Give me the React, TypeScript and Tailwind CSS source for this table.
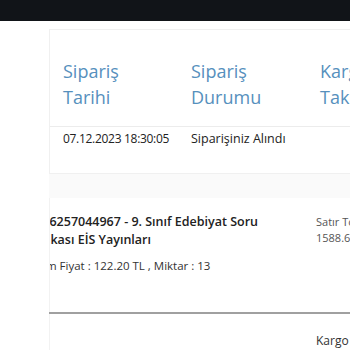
import React from 'react';

const font = { fontFamily: '"Open Sans", "Noto Sans", sans-serif' };

const App: React.FC = () => {
  return (
    <div className="w-[350px] h-[350px] overflow-hidden bg-white" style={font}>
      <div className="h-[21px] bg-[#111418]" />
      <div className="pl-[49px] pt-[8px]">
        {/* order table */}
        <div className="w-[420px] border border-r-0 border-[#f0f0f0]">
          <div className="grid grid-cols-[128px_129px_128px] border-b border-[#ececec] pl-[13px] pt-[28px] pb-[16px]">
            {['Sipariş Tarihi', 'Sipariş Durumu', 'Kargo Takip'].map((h) => (
              <div key={h} className="text-[18px] leading-[26px] text-[#5690bd] w-[80px]">
                {h}
              </div>
            ))}
          </div>
          <div className="grid grid-cols-[128px_129px_128px] pl-[13px] pt-[2px] h-[46px] leading-[20px] text-[#222]">
            <div className="text-[12px] tracking-[-0.3px]">07.12.2023 18:30:05</div>
            <div className="text-[12.5px]">Siparişiniz Alındı</div>
            <div />
          </div>
        </div>
        <div className="h-[24px] bg-[#fafafa]" />

        {/* order item */}
        <div className="flex border-l border-[#f2f2f2] h-[114px]">
          <div className="w-[266px] shrink-0 overflow-hidden pt-[15px]">
            <div className="-ml-[22px]">
              <div className="text-[12.5px] leading-[18px] font-semibold text-[#222]">
                9786257044967 - 9. Sınıf Edebiyat Soru
                <br />
                <span className="-ml-[1px]">Bankası EİS Yayınları</span>
              </div>
              <div className="mt-[8px] text-[11.5px] leading-[18px] text-[#333] whitespace-nowrap">
                Birim Fiyat : 122.20 TL , Miktar : 13
              </div>
            </div>
          </div>
          <div className="pt-[16px] text-[11px] leading-[16px] text-[#555] whitespace-nowrap">
            <div>Satır Toplamı</div>
            <div>1588.60 TL</div>
          </div>
        </div>
        <div className="h-[2px] bg-[#a0a0a0]" />
        <div className="flex border-l border-[#f2f2f2] h-[40px]">
          <div className="w-[266px] shrink-0" />
          <div className="pt-[18px] text-[12px] leading-[18px] text-[#333] whitespace-nowrap">Kargo Ücreti</div>
        </div>
      </div>
    </div>
  );
};

export default App;
